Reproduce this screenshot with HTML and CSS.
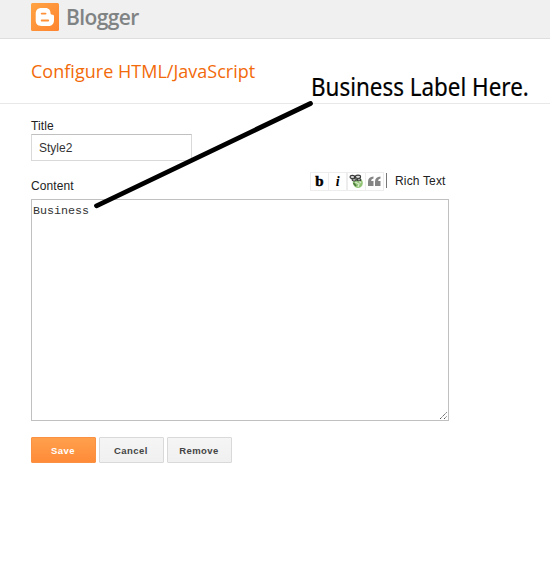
FILE: index.html
```html
<!DOCTYPE html>
<html lang="en">
<head>
<meta charset="utf-8">
<title>Configure HTML/JavaScript</title>
<link rel="stylesheet" href="styles.css">
</head>
<body>
<header class="topbar">
  <svg class="logo" viewBox="0 0 28 28">
    <defs><linearGradient id="orange" x1="0" y1="0" x2="1" y2="1"><stop offset="0" stop-color="#ffa343"/><stop offset="1" stop-color="#ff8430"/></linearGradient></defs>
    <rect width="28" height="28" rx="1.5" fill="url(#orange)"/>
    <path d="M10.5 5H14.5C18 5 19.5 7.5 19.5 10C19.5 11.3 20 11.7 21.3 11.7C22.7 11.7 23 12.2 23 13.5V17C23 21 20.8 23 17 23H10.5C6.7 23 4.7 21 4.7 17.3V11C4.7 7 6.7 5 10.5 5Z" fill="#fff"/>
    <path d="M10.7 10.6H14.5M10.7 17.5H17.2" stroke="#ff9138" stroke-width="1.9" stroke-linecap="round"/>
  </svg>
  <span class="brand">Blogger</span>
</header>
<div class="heading"><h1>Configure HTML/JavaScript</h1></div>
<main class="form">
  <label class="label" for="title">Title</label>
  <input class="title-input" id="title" type="text" value="Style2">
  <div class="content-row">
    <label class="label" for="content">Content</label>
    <div class="tools">
      <span class="tool bold">b</span>
      <span class="tool italic">i</span>
      <span class="tool"><svg width="17" height="17" viewBox="0 0 17 17">
        <path d="M5 8Q8 5 13 6Q16 9 14 13Q11 16.5 7 14Q4 11 5 8" fill="#91c575"/>
        <path d="M7 9L11 11L10 14M11 8L13 10" stroke="#d7e9c9" stroke-width="1.3" fill="none"/>
        <path d="M5.5 10L8 13" stroke="#49743b" stroke-width="1.4"/>
        <g fill="#ddd" stroke="#383a38" stroke-width="1.1"><ellipse cx="4.4" cy="4" rx="2.3" ry="1.6"/><ellipse cx="10" cy="3.8" rx="2.6" ry="1.7"/><ellipse cx="6.2" cy="6.8" rx="2.2" ry="1.2"/><ellipse cx="11" cy="6.7" rx="1.8" ry="1.1"/></g>
      </svg></span>
      <span class="tool"><svg width="17" height="17" viewBox="0 0 17 17" fill="#858585"><path d="M7.5 3.5V5.5Q5.2 5.8 5.1 8H7.5V13H2V8.8Q2 3.8 7.5 3.5ZM14.5 3.5V5.5Q12.2 5.8 12.1 8H14.5V13H9V8.8Q9 3.8 14.5 3.5Z"/></svg></span>
      <span class="divider"></span>
      <span class="rich">Rich Text</span>
    </div>
  </div>
  <div class="editor" id="content">Business
    <svg class="grip" width="9" height="9" viewBox="0 0 9 9"><path d="M1 8L8 1M5 8L8 5" stroke="#555" stroke-dasharray="1.4 .6"/></svg>
  </div>
  <div class="buttons">
    <button class="button primary">Save</button>
    <button class="button">Cancel</button>
    <button class="button">Remove</button>
  </div>
</main>
<div class="callout">Business Label Here.</div>
<svg class="pointer" width="550" height="584" viewBox="0 0 550 584"><path d="M96.5 205.8L310.5 103.5" stroke="#000" stroke-width="4.8" stroke-linecap="round"/></svg>
</body>
</html>
```
FILE: styles.css
```css
* { box-sizing: border-box; }
body { margin: 0; height: 584px; position: relative; overflow: hidden; background: #fff; color: #222; font-family: "Liberation Sans", Arial, sans-serif; font-size: 12px; }
.topbar { height: 39px; background: #f0f0f0; border-bottom: 1px solid #dedede; padding: 3px 31px; display: flex; gap: 7px; }
.logo { width: 28px; height: 28px; flex: none; }
.brand { font: 600 21px/28px "Open Sans", sans-serif; letter-spacing: -.6px; color: #808384; }
.heading { height: 65px; padding: 19px 31px 0; border-bottom: 1px solid #e8e8e8; }
h1 { margin: 0; font: 400 18px/26px "Open Sans", sans-serif; letter-spacing: .02px; color: #f26a0a; white-space: nowrap; }
.form { padding: 15px 31px 0; }
.label { display: block; height: 15px; line-height: 15px; letter-spacing: .1px; }
.title-input { display: block; width: 161px; height: 27px; padding: 0 7px; border: 1px solid #d9d9d9; border-top-color: #c0c0c0; color: #333; background: #fff; font: 12px "Liberation Sans", Arial, sans-serif; }
.content-row { width: 418px; height: 38px; display: flex; justify-content: space-between; padding-top: 11px; }
.content-row .label { padding-top: 7px; }
.tools { display: flex; height: 19px; width: 139px; }
.tool { width: 19px; height: 19px; margin-right: -.7px; flex: none; border: 1px solid #ededed; display: flex; justify-content: center; align-items: center; color: #000; background: #fff; }
.bold { font: bold 15px/17px "Liberation Serif", serif; -webkit-text-stroke: .5px #000; }
.italic { font: italic bold 14px/17px "Liberation Serif", serif; }
.divider { width: 1px; height: 15px; margin: 1px 8px 0 2.8px; background: #777; }
.rich { line-height: 18px; white-space: nowrap; letter-spacing: .15px; }
.editor { position: relative; width: 418px; height: 222px; border: 1px solid #c0c0c0; padding: 4px 1px; font: 11.7px/15px "Liberation Mono", monospace; color: #333; }
.grip { position: absolute; right: 0; bottom: 0; }
.buttons { display: flex; gap: 3px; margin-top: 16px; }
.button { width: 65px; height: 26px; padding: 0 1px 0 0; border: 1px solid #d9d9d9; border-radius: 1px; background: linear-gradient(#f5f5f5, #f0f0f0); color: #444; font: bold 9.5px "Liberation Sans", Arial, sans-serif; letter-spacing: .45px; }
.primary { border-color: #fa9143; background: linear-gradient(#ffa04d, #ff8b38); color: #fff; }
.callout { position: absolute; left: 311px; top: 70px; font: 400 24.5px/34px "Noto Sans", sans-serif; color: #000; white-space: nowrap; transform: scaleX(.915); transform-origin: left; -webkit-text-stroke: .2px #000; }
.pointer { position: absolute; left: 0; top: 0; pointer-events: none; }
```
